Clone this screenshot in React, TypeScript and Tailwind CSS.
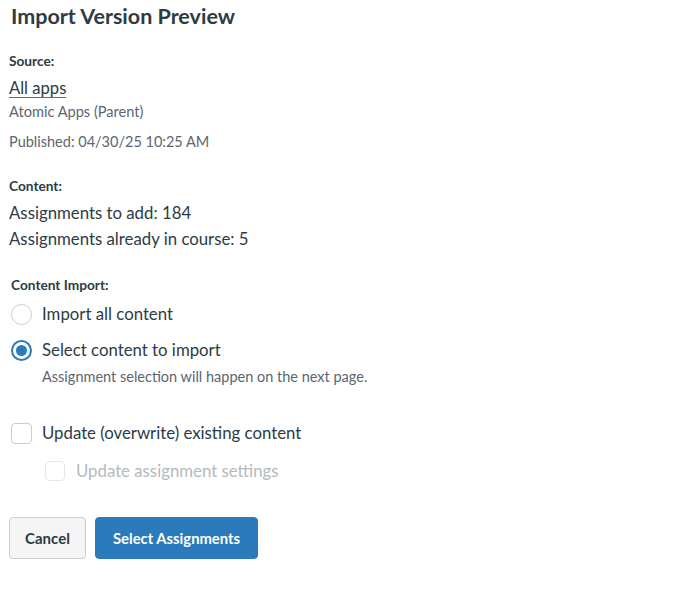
import { useState } from "react";

export default function App() {
  const [mode, setMode] = useState<"all" | "select">("select");
  const [overwrite, setOverwrite] = useState(false);

  return (
    <div className="min-h-[596px] w-[688px] bg-white text-[#2d3b45] font-['Lato',sans-serif]">
      <div className="px-[9px]">
        <h1 className="pl-[2px] text-[21.5px] font-bold leading-[32px]">Import Version Preview</h1>

        <div className="mt-[19px] text-[13.7px] font-bold leading-[20px]">Source:</div>
        <a href="#" className="mt-[4px] block text-[16.6px] leading-[26px] underline decoration-[#2b7abc] underline-offset-[3px]">
          All apps
        </a>
        <div className="text-[14.6px] leading-[22px] text-[#5b6670]">Atomic Apps (Parent)</div>
        <div className="mt-[8px] text-[14.5px] leading-[22px] text-[#5b6670]">Published: 04/30/25 10:25 AM</div>

        <div className="mt-[23px] text-[13.7px] font-bold leading-[20px]">Content:</div>
        <div className="mt-[4px] text-[16.8px] leading-[26px]">Assignments to add: 184</div>
        <div className="text-[16.8px] leading-[26px]">Assignments already in course: 5</div>

        <fieldset className="mt-[23px] pl-[2px]">
          <legend className="text-[13.7px] font-bold leading-[20px]">Content Import:</legend>

          <label className="mt-[6px] flex items-center gap-[10px] cursor-pointer" onClick={() => setMode("all")}>
            <span
              className={
                mode === "all"
                  ? "flex h-[21px] w-[21px] items-center justify-center rounded-full border-2 border-[#2b7abc]"
                  : "flex h-[21px] w-[21px] items-center justify-center rounded-full border-[1.5px] border-[#c7cdd1]"
              }
            >
              {mode === "all" && <span className="h-[11px] w-[11px] rounded-full bg-[#2b7abc]" />}
            </span>
            <span className="text-[16.8px] leading-[26px]">Import all content</span>
          </label>

          <label className="mt-[10px] flex items-center gap-[10px] cursor-pointer" onClick={() => setMode("select")}>
            <span
              className={
                mode === "select"
                  ? "flex h-[21px] w-[21px] items-center justify-center rounded-full border-2 border-[#2b7abc]"
                  : "flex h-[21px] w-[21px] items-center justify-center rounded-full border-[1.5px] border-[#c7cdd1]"
              }
            >
              {mode === "select" && <span className="h-[11px] w-[11px] rounded-full bg-[#2b7abc]" />}
            </span>
            <span className="text-[16.8px] leading-[26px]">Select content to import</span>
          </label>
          <div className="mt-[3px] pl-[31px] text-[14.5px] leading-[22px] text-[#5b6670]">
            Assignment selection will happen on the next page.
          </div>

          <label className="mt-[32px] flex items-center gap-[10px] cursor-pointer" onClick={() => setOverwrite(!overwrite)}>
            <span
              className={
                overwrite
                  ? "flex h-[21px] w-[21px] items-center justify-center rounded-[4px] border-2 border-[#2b7abc] bg-[#2b7abc] text-white"
                  : "flex h-[21px] w-[21px] items-center justify-center rounded-[4px] border-[1.5px] border-[#c7cdd1]"
              }
            >
              {overwrite && (
                <svg viewBox="0 0 16 16" className="h-[13px] w-[13px]" fill="none" stroke="currentColor" strokeWidth="2.5">
                  <path d="M3 8.5l3 3 7-7" />
                </svg>
              )}
            </span>
            <span className="text-[16.8px] leading-[26px]">Update (overwrite) existing content</span>
          </label>

          <label className="mt-[12px] ml-[34px] flex items-center gap-[11px] text-[#b4b9bd]">
            <span className="h-[20px] w-[20px] rounded-[4px] border-[1.5px] border-[#e4e6e8]" />
            <span className="text-[16.8px] leading-[26px]">Update assignment settings</span>
          </label>
        </fieldset>

        <div className="mt-[33px] flex gap-[9px]">
          <button className="h-[42px] w-[77px] rounded-[4px] border border-[#c7cdd1] bg-[#f5f5f5] text-[15px] font-bold text-[#2d3b45]">
            Cancel
          </button>
          <button className="h-[42px] w-[163px] rounded-[4px] border border-[#2b7abc] bg-[#2b7abc] text-[14.8px] font-bold text-white">
            Select Assignments
          </button>
        </div>
      </div>
    </div>
  );
}
